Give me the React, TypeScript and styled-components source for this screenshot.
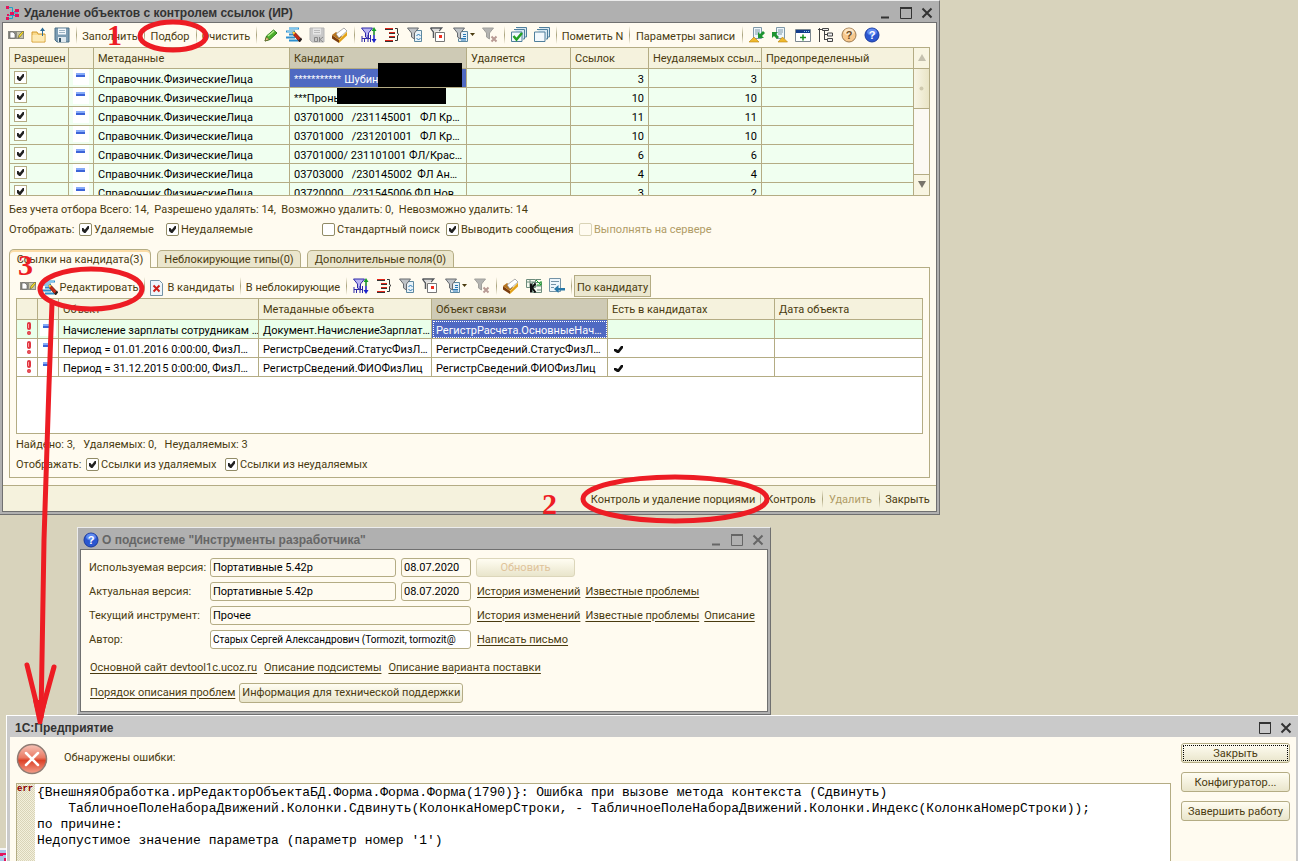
import React from 'react';
import styled, { createGlobalStyle, css } from 'styled-components';

const c = {
  desk: '#d8d3bc',
  paper: '#fffbf0',
  head: '#f5f2dd',
  headActive: '#cecab5',
  line: '#b4ac84',
  text: '#4a3b10',
  muted: '#b09c66',
  green: '#f0fff0',
  select: '#4f69c2',
  mark: '#ed1c24',
  frame: '#b0b0b0',
  frameDark: '#707070',
};

const Global = createGlobalStyle`
  *, *::before, *::after { box-sizing: border-box; }
  body { margin: 0; background: ${c.desk}; }
  body, button, input { font: 11px/14px Roboto, "Liberation Sans", sans-serif; color: ${c.text}; }
`;

/* ---------- desktop and window frames ---------- */

const Desktop = styled.main`
  position: relative;
  min-height: 100vh;
  overflow: hidden;
  background: ${c.desk};
`;

const frame = css`
  position: absolute;
  display: flex;
  flex-direction: column;
`;

const ToolWindow = styled.section`
  ${frame}
  padding: 0 2px 2px;
  background: ${c.frame};
  border: 1px solid;
  border-color: #ececec ${c.frameDark} ${c.frameDark} #ececec;
`;

const MainWindow = styled(ToolWindow)`
  left: -1px;
  top: 0;
  width: 941px;
  height: 515px;
`;

const AboutWindow = styled(ToolWindow)`
  left: 77px;
  top: 527px;
  width: 694px;
  height: 188px;
`;

const ErrorWindow = styled.section`
  ${frame}
  left: 6px;
  right: 0;
  top: 715px;
  bottom: 0;
  padding: 0 2px 0 3px;
  background: #cacaca;
  border: solid #fff;
  border-width: 1px 0 0 1px;
`;

const TitleBar = styled.header<{ $inactive?: boolean; $plain?: boolean }>`
  display: flex;
  align-items: center;
  gap: 3px;
  height: 21px;
  flex: none;
  padding: 2px 0 0 ${p => (p.$plain ? 5 : 3)}px;
  color: ${p => (p.$inactive ? '#666' : '#333')};
`;

const Title = styled.h1`
  flex: 1;
  margin: 0;
  font: bold 12px/16px "Liberation Sans", sans-serif;
  white-space: nowrap;
`;

const WindowButtonRow = styled.div`
  display: flex;
`;

const WindowButton = styled.button`
  width: 21px;
  height: 18px;
  padding: 0;
  border: 0;
  background: none;
  color: inherit;
  display: grid;
  place-items: center;
`;

const Body = styled.div`
  flex: 1;
  min-height: 0;
  display: flex;
  flex-direction: column;
  background: ${c.paper};
  border: 1px solid ${c.frameDark};
`;

/* ---------- toolbar parts ---------- */

const Toolbar = styled.div<{ $inner?: boolean }>`
  display: flex;
  align-items: center;
  flex: none;
  height: ${p => (p.$inner ? 22 : 24)}px;
  padding-left: ${p => (p.$inner ? 0 : 1)}px;
`;

const IconButton = styled.button<{ $menu?: boolean }>`
  width: ${p => (p.$menu ? 29 : 23)}px;
  height: 22px;
  padding: 0;
  border: 0;
  background: none;
  display: flex;
  align-items: center;
  justify-content: center;
  gap: 1px;
`;

const TextButton = styled.button<{ $w: number }>`
  width: ${p => p.$w}px;
  height: 22px;
  padding: 3px 0 0;
  border: 0;
  background: none;
  display: flex;
  align-items: center;
  justify-content: center;
  gap: 2px;
  white-space: nowrap;
  &:disabled { color: ${c.muted}; }
`;

const ToggleButton = styled(TextButton)`
  background: #ebe7cf;
  border: 1px solid ${c.line};
`;

const Separator = styled.span`
  width: 6px;
  height: 18px;
  flex: none;
  background: linear-gradient(transparent, #aaa37c, transparent) 3px 0 / 1px 100% no-repeat;
`;

/* ---------- data grids ---------- */

const GridFrame = styled.div<{ $h: number }>`
  display: flex;
  flex: none;
  height: ${p => p.$h}px;
  border: 1px solid ${c.line};
  background: #fff;
  overflow: hidden;
`;

const Grid = styled.table`
  flex: 1;
  width: 100%;
  height: max-content;
  table-layout: fixed;
  border-collapse: separate;
  border-spacing: 0;
  color: #000;
`;

const Col = styled.col<{ $w?: number }>`
  width: ${p => (p.$w ? `${p.$w}px` : 'auto')};
`;

const cell = css`
  border: solid ${c.line};
  border-width: 0 1px 1px 0;
  text-align: left;
  font-weight: normal;
  white-space: pre;
  overflow: hidden;
`;

const Th = styled.th<{ $active?: boolean; $edge?: boolean }>`
  ${cell}
  height: 21px;
  padding: 2px 4px 0;
  color: ${c.text};
  background: ${p => (p.$active ? c.headActive : c.head)};
  &:last-child { border-right-width: ${p => (p.$edge ? 1 : 0)}px; }
`;

const Td = styled.td<{ $num?: boolean; $selected?: boolean; $icon?: boolean; $dotted?: boolean }>`
  ${cell}
  height: 19px;
  padding: 3px 4px 0;
  line-height: 14px;
  ${p => p.$num && 'text-align: right;'}
  ${p => p.$icon && 'padding: 0; vertical-align: top; line-height: 0; text-align: center;'}
  ${p => p.$selected && `background: ${c.select}; color: #fff;`}
  ${p => p.$dotted && 'outline: 1px dotted #fff; outline-offset: -2px;'}
`;

const TickBox = styled.span`
  display: flex;
  align-items: center;
  padding-left: 2px;
  height: 12px;
`;

const Stars = styled.span`
  font-family: "Liberation Sans", sans-serif;
`;

const Row = styled.tr<{ $tint?: string }>`
  background: ${p => p.$tint ?? '#fff'};
  & > td:last-child { border-right: ${p => (p.$tint === c.green ? '1px' : '0')} solid ${c.line}; }
`;

const ScrollBar = styled.div`
  width: 15px;
  flex: none;
  display: flex;
  flex-direction: column;
  background: #fbf9f3;
`;

const ScrollButton = styled.button<{ $end?: boolean }>`
  height: 21px;
  padding: 0;
  border: solid ${c.line};
  border-width: ${p => (p.$end ? '1px 0 0' : '0 0 1px')};
  background: #f8f5e2;
  display: grid;
  place-items: center;
`;

const ScrollThumb = styled.div`
  height: 40px;
  display: grid;
  place-items: center;
  border-bottom: 1px solid ${c.line};
  background: linear-gradient(90deg, #f8f6e6, #e9e4c6);
  margin-bottom: auto;
`;

/* ---------- check boxes and text rows ---------- */

const CheckBox = styled.input<{ $square?: boolean }>`
  appearance: none;
  flex: none;
  display: inline-block;
  width: 13px;
  height: 13px;
  margin: 0;
  background: #fff;
  border: 1px solid ${p => (p.$square ? c.line : '#918b66')};
  border-radius: ${p => (p.$square ? 0 : 2)}px;
  &:disabled { border-color: #d9d3b6; background: ${c.paper}; }
  &:checked::after {
    content: '';
    display: block;
    width: 7px;
    height: 7px;
    margin: 2px;
    background: #222;
    clip-path: polygon(0 30%, 20% 30%, 40% 55%, 82% 0, 100% 0, 100% 35%, 50% 100%, 30% 100%, 0 70%);
  }
`;

const CheckCell = styled.span`
  display: block;
  height: 18px;
  padding: 2px 0 0 4px;
  text-align: left;
`;

const InfoRow = styled.div`
  display: flex;
  align-items: center;
  flex: none;
  height: 20px;
  padding-top: 1px;
  white-space: pre;
`;

const Caption = styled.span`
  width: 70px;
`;

const CheckLabel = styled.label<{ $w?: number; $off?: boolean }>`
  width: ${p => (p.$w ? `${p.$w}px` : 'auto')};
  display: flex;
  align-items: center;
  gap: 2px;
  color: ${p => (p.$off ? c.muted : 'inherit')};
`;

/* ---------- main window ---------- */

const Content = styled.div`
  flex: 1;
  display: flex;
  flex-direction: column;
  padding: 0 6px 7px;
`;

const Status = styled.div`
  padding: 3px 0 10px;
`;

const Tabs = styled.div`
  display: flex;
  align-items: flex-end;
  gap: 6px;
  height: 18px;
  flex: none;
`;

const Tab = styled.button<{ $active?: boolean; $w: number }>`
  width: ${p => p.$w}px;
  height: ${p => (p.$active ? 19 : 17)}px;
  margin-bottom: ${p => (p.$active ? -1 : 0)}px;
  padding: 1px 0 0;
  border: 1px solid ${c.line};
  border-bottom: 0;
  border-radius: 5px 5px 0 0;
  background: ${p => (p.$active ? c.paper : '#ebe6cd')};
  ${p => p.$active && 'position: relative; box-shadow: inset 0 2px 0 #fbdca6;'}
`;

const TabPanel = styled.div`
  flex: 1;
  display: flex;
  flex-direction: column;
  padding: 7px 6px 0;
  border: 1px solid ${c.line};
`;

const ReferenceBox = styled.div`
  padding-top: 1px;
`;

const Footer = styled.footer`
  display: flex;
  align-items: center;
  justify-content: flex-end;
  flex: none;
  height: 26px;
  padding-right: 3px;
  background: ${c.head};
  border-top: 1px solid ${c.line};
`;

/* ---------- about window ---------- */

const AboutBody = styled(Body)`
  padding: 8px 8px 0;
`;

const Form = styled.div`
  display: grid;
  grid-template-columns: 116px 186px 70px 1fr;
  gap: 5px;
  align-items: center;
`;

const FieldLabel = styled.label`
  white-space: nowrap;
`;

const Field = styled.input<{ $wide?: boolean; $small?: boolean }>`
  ${p => p.$wide && 'grid-column: 2 / 4;'}
  width: 100%;
  min-width: 0;
  height: 19px;
  padding: 0 2px;
  color: #000;
  background: ${p => (p.$small ? '#fff' : c.paper)};
  border: 1px solid ${c.line};
  border-radius: 3px;
  ${p => p.$small && 'font-size: 10px;'}
`;

const Links = styled.div<{ $gap: number }>`
  display: flex;
  align-items: center;
  gap: ${p => p.$gap}px;
  padding-left: 1px;
`;

const BottomLinks = styled(Links)`
  height: 19px;
  margin-top: ${p => (p.$gap > 6 ? 9 : 6)}px;
`;

const Link = styled.a`
  color: ${c.text};
  text-decoration: underline;
  text-underline-offset: 2px;
  white-space: nowrap;
`;

const PushButton = styled.button<{ $w: number; $focus?: boolean }>`
  width: ${p => p.$w}px;
  height: 20px;
  padding: 1px 0 0;
  border: 1px solid ${c.line};
  border-radius: 3px;
  background: linear-gradient(#fffdf2, #e9e5cb);
  white-space: nowrap;
  ${p => p.$focus && 'outline: 1px dotted #000; outline-offset: -3px;'}
  &:disabled { color: #dfc39a; border-color: #dcd6ba; height: 19px; }
`;

/* ---------- error window ---------- */

const ErrorBody = styled.div`
  flex: 1;
  display: flex;
  gap: 10px;
  min-height: 0;
  padding: 6px 6px 0;
  background: ${c.paper};
`;

const ErrorMain = styled.div`
  flex: 1;
  display: flex;
  flex-direction: column;
`;

const ErrorHead = styled.div`
  display: flex;
  gap: 16px;
  height: 40px;
  line-height: 29px;
`;

const ErrorText = styled.div`
  flex: 1;
  display: flex;
  background: #fff;
  border: 1px solid ${c.line};
  border-bottom: 0;
`;

const Gutter = styled.div`
  width: 18px;
  overflow: hidden;
  color: #8b0000;
  font: bold 9px/10px "Liberation Mono", monospace;
  background: repeating-conic-gradient(#d9d4b8 0 25%, #f3f0dc 0 50%) 0 0 / 2px 2px;
`;

const Message = styled.textarea`
  flex: 1;
  padding: 1px 2px;
  border: 0;
  resize: none;
  overflow: hidden;
  background: none;
  color: #000;
  font: 13px/16px "Liberation Mono", monospace;
  white-space: pre;
`;

const Side = styled.div`
  display: flex;
  flex-direction: column;
  gap: 9px;
`;

/* ---------- marker layer ---------- */

const Marks = styled.svg`
  position: absolute;
  inset: 0;
  width: 100%;
  height: 100%;
  pointer-events: none;
`;

const Numeral = styled.span<{ $x: number; $y: number }>`
  position: absolute;
  left: ${p => p.$x}px;
  top: ${p => p.$y}px;
  color: ${c.mark};
  font: bold 30px/30px "Liberation Serif", serif;
`;

const TaskIcon = styled.div`
  position: absolute;
  left: 0;
  top: 848px;
  width: 6px;
  height: 13px;
  background: #a9c4e8;
  border-top: 2px solid #f4f4f4;
  line-height: 0;
`;

/* ---------- icons ---------- */

const Svg = ({ children, w = 16, h = 16 }: { children: React.ReactNode; w?: number; h?: number }) => (
  <svg width={w} height={h} viewBox={`0 0 ${w} ${h}`} fill="none" aria-hidden="true">{children}</svg>
);

const TreeLogo = () => (
  <Svg>
    <path d="M4 2.500h3.500v11H4M7.500 8H13M5 10.500h7M9 6.500h4M4 10.500h4" stroke="#1ea0c8" />
    <path d="M1 1h3v3H1zM1 12h3v3H1zM5 7h4v3H5zM10 4h4v3h-4zM10 9h4v3h-4zM2 9h2v2H2z" fill="#e4125c" />
  </Svg>
);
const FormIcon = () => (
  <Svg>
    <path d="M0 4h16v8H0z" fill="#8c8c84" />
    <path d="M2 5h3l2 2v4H2z" fill="#fff" stroke="#555" strokeWidth=".6" />
    <path d="M9 5h6v6H9z" fill="#c9c5a8" />
    <path d="M10 11l1-3 4-4 1 1-4 5z" fill="#ffe11c" stroke="#444" strokeWidth=".5" />
  </Svg>
);
const FolderUp = () => (
  <Svg>
    <path d="M1 5h5l1 2h7v8H1z" fill="#f9d98a" stroke="#d29a2c" />
    <path d="M1.500 8h12v6.500h-12z" fill="#fdeab4" />
    <path d="M11.500 9V3" stroke="#2d6b96" />
    <path d="M9 4l2.500-3.500L14 4z" fill="#2d6b96" />
  </Svg>
);
const Floppy = ({ off }: { off?: boolean }) => (
  <Svg>
    <path d="M1 1h14v14H3l-2-2z" fill={off ? '#c9c9c9' : '#7d9db3'} stroke={off ? '#b5b5b5' : '#4d7088'} />
    <path d="M4 1.500h8v6H4z" fill={off ? '#e6e6e6' : '#f4f9fc'} />
    <path d="M5 3.500h6M5 5.500h6" stroke={off ? '#bbb' : '#9db4c4'} />
    {off
      ? <path d="M5.500 10.500h3v4h-3zM10.500 10v5M14 10l-3 2.500L14 15" stroke="#888" />
      : <><path d="M4 10h8v5H4z" fill="#dfe9ef" /><path d="M5 11h2v4H5z" fill="#33536a" /></>}
  </Svg>
);
const Pencil = () => (
  <Svg>
    <path d="M2 14l1.500-5 7-6 3.500 3-7 6.500z" fill="#4caf2c" stroke="#2c7a1a" />
    <path d="M5 9l6-5" stroke="#b4ec8c" strokeWidth="1.500" />
    <path d="M2 14l1.500-4 2.500 2.500z" fill="#f2d08c" stroke="#5a4a20" strokeWidth=".6" />
  </Svg>
);
const ListPencil = () => (
  <Svg>
    <path d="M3 1.500h10M0 4.500h9M3 7.500h7M0 10.500h9M3 13.500h9" stroke="#2c8fd0" strokeWidth="2" />
    <path d="M3 1.500h9M1 4.500h7" stroke="#7cc8f0" />
    <path d="M7 5l2 .3 6.500 7-2 2.500L7.500 8z" fill="#c62a17" stroke="#5c1208" strokeWidth=".7" />
    <path d="M6.500 4.500L9.500 5.500 7.500 8z" fill="#ffd83c" />
    <path d="M12 14l3-3.500 1 2-2 2.500z" fill="#222" />
  </Svg>
);
const Book = () => (
  <Svg>
    <path d="M0 8l7 5V16l-7-4.500z" fill="#7a3c0c" />
    <path d="M7 13l8-8v3.500L7 16z" fill="#e0a01a" />
    <path d="M0 8l4-3 6 4.500L7 13z" fill="#b8741c" />
    <path d="M4 7l8-6 3 3-8 7z" fill="#fff" stroke="#777" strokeWidth=".6" />
    <path d="M7 13l8-8" stroke="#f4c44c" />
  </Svg>
);
const Funnel = ({ fill = '#bfc3c7', stroke = '#666a6f' }: { fill?: string; stroke?: string }) => (
  <path d="M.5 1h11L7.500 6v6l-3-2V6z" fill={fill} stroke={stroke} />
);
const FilterSort = () => (
  <Svg>
    <Funnel fill="#b8b4f4" stroke="#2f2aa8" />
    <path d="M1 15V9M3.500 15v-4M7 15V8M9.500 15V8M1 11.500h9" stroke="#2f2aa8" />
    <path d="M13 8V3" stroke="#108a20" strokeWidth="1.500" /><path d="M10.500 4L13 0l2.500 4z" fill="#18a028" />
    <path d="M13 8v5" stroke="#1a22c8" strokeWidth="1.500" /><path d="M10.500 12l2.500 4 2.500-4z" fill="#1a22c8" />
  </Svg>
);
const RedBrace = () => (
  <Svg>
    <path d="M1 1.500h8M5 5.500h6M5 9.500h6M1 13.500h8" stroke="#e02418" />
    <path d="M1 2.500h8M5 6.500h6M5 10.500h6M1 14.500h8" stroke="#333" />
    <path d="M11 1.500h2.500v5l1.500 1-1.500 1v5H11" stroke="#333" />
  </Svg>
);
const FilterPage = () => (
  <Svg>
    <path d="M8.500 3.500h6v11h-7v-4" fill="#e8f2f8" stroke="#5d88a0" />
    <path d="M9.500 9l2-2 2 2M9.500 11l2 2 2-2" stroke="#2677b4" />
    <Funnel />
  </Svg>
);
const FilterRed = () => (
  <Svg>
    <path d="M5.500 5.500h9v9h-9z" fill="#fff" stroke="#777" />
    <path d="M9 8h3v3H9z" fill="#f03020" />
    <path d="M.5 1h11L9 4M.5 1l3 4v6" stroke="#55595e" strokeWidth="1.500" />
    <path d="M2 2h8L8 4.500H4z" fill="#dcdcdc" />
  </Svg>
);
const FilterList = () => (
  <Svg>
    <path d="M8.500 4.500h6v10h-9v-3" fill="#e8f2f8" stroke="#5d88a0" />
    <path d="M10 7.500h3M10 9.500h3M8 11.500h5M8 13h5" stroke="#2677b4" />
    <Funnel />
  </Svg>
);
const FilterOff = () => (
  <Svg>
    <Funnel fill="#b4b4b2" stroke="#a0a09c" />
    <path d="M9.500 9.500l5 5M14.500 9.500l-5 5" stroke="#b89a94" strokeWidth="2" />
  </Svg>
);
const Stack = ({ check }: { check?: boolean }) => (
  <Svg>
    <path d="M5 .5h10.500V10H14M3 2.500h10.500V12H12" stroke="#4f7f9c" fill="#d7e8f2" />
    <path d="M.5 5h10.500v9.500H.5z" fill="#f3f9fd" stroke="#4f7f9c" />
    {check && <path d="M2.500 9l3 3.500L11 6" stroke="#23a023" strokeWidth="2.500" />}
  </Svg>
);
const ListGold = ({ left }: { left?: boolean }) => (
  <Svg>
    <path d="M4.500.5h8v11h-8z" fill="#eef6fb" stroke="#7f99a8" />
    <path d="M6 3h5M6 5h5M6 7h4" stroke="#7f99a8" />
    <path d={left ? 'M6 15l4.500-5 5 5z' : 'M0 15l5-5 5 5z'} fill="#efb92c" stroke="#b88410" strokeWidth=".6" />
    {left
      ? <path d="M0 5h6L4 7l3 3-2 2-3-3-2 2z" fill="#1d9430" />
      : <path d="M9 11V5l2 2 3-3 2 2-3 3 2 2z" fill="#1d9430" />}
  </Svg>
);
const WindowPlus = () => (
  <Svg>
    <path d="M.5 2.500h15v12H.5z" fill="#fff" stroke="#7c8890" />
    <path d="M1 3h14v3H1z" fill="#123c8c" />
    <path d="M9 4.500h5" stroke="#8cd0f0" strokeDasharray="1 1" />
    <path d="M8 7.500v6M5 10.500h6" stroke="#169020" strokeWidth="1.500" />
  </Svg>
);
const TreeIcon = () => (
  <Svg>
    <path d="M1.500 1v14M0 2.500h5M6.500 4v9M6 7.500h3M6 12.500h3" stroke="#444" />
    <path d="M4.500 1.500h6v2h-6zM9.500 6h5v3h-5zM9.500 11.500h5v3h-5z" fill="#eee" stroke="#444" />
  </Svg>
);
const QMark = styled.text`
  font: bold 11px "Liberation Sans", sans-serif;
  text-anchor: middle;
`;
const Help = ({ blue }: { blue?: boolean }) => (
  <Svg>
    <circle cx="8" cy="8" r="7" fill={blue ? '#2b57d0' : '#f8c88c'} stroke={blue ? '#1b3a9c' : '#9c7a50'} />
    <ellipse cx="8" cy="5" rx="5" ry="3.500" fill={blue ? '#5f8af0' : '#fde6c4'} />
    <QMark x="8" y="12" fill={blue ? '#fff' : '#6c4a20'}>?</QMark>
  </Svg>
);
const PageCross = () => (
  <Svg>
    <path d="M1.500.5h9l3 3v12h-12z" fill="#eef6fb" stroke="#7493a6" />
    <path d="M4.500 5.500l6 6M10.500 5.500l-6 6" stroke="#d02018" strokeWidth="2" />
  </Svg>
);
const GridK = () => (
  <Svg>
    <path d="M.5 1.500h9v8h-9zM6.500 4.500h9v10h-9z" fill="#f6faf0" stroke="#6d8c7c" />
    <path d="M1 4h8M4 2v7M10 1.500h5M7 8h8M11 12h4" stroke="#6d8c7c" />
    <path d="M5 5.500v9M9.500 5.500l-3.500 4 3.500 5" stroke="#111" strokeWidth="2" />
    <path d="M10 2l5 5M15 3v4h-4" stroke="#18a028" />
  </Svg>
);
const PageArrow = () => (
  <Svg>
    <path d="M.5.5h11v13H.5z" fill="#eef6fb" stroke="#7493a6" />
    <path d="M2 3.500h8M2 6.500h5M2 9.500h3" stroke="#7493a6" />
    <path d="M5 11l4.500-4v3H16v2.500H9.500V15z" fill="#2878a8" />
  </Svg>
);
const Caret = () => <Svg w={5} h={16}><path d="M0 6h5L2.500 9z" fill="#4a3b10" /></Svg>;
const Dash = () => (
  <Svg h={18}>
    <path d="M0 0h16v16H0z" fill="#fff" />
    <path d="M3 4h9v4H3z" fill="#3c64d8" /><path d="M3 4h9v2H3z" fill="#86aaf8" />
  </Svg>
);
const Alert = () => (
  <Svg h={18}>
    <rect x="8" y="2" width="4" height="8" rx="2" fill="#e03440" />
    <rect x="8" y="11" width="4" height="4" rx="2" fill="#e03440" />
    <path d="M9.500 4v4M9.500 13h1" stroke="#ff9a9c" />
  </Svg>
);
const Tick = () => <TickBox><Svg w={9} h={9}><path d="M0 4h2l2 1 3-4h2v2L5 8H3L0 6z" fill="#111" /></Svg></TickBox>;
const ErrorIcon = () => (
  <Svg w={32} h={32}>
    <defs>
      <linearGradient id="ball" x1="0" y1="0" x2="0" y2="1">
        <stop offset="0" stopColor="#f6c4b8" /><stop offset=".45" stopColor="#ea7a64" />
        <stop offset=".55" stopColor="#dc4228" /><stop offset="1" stopColor="#f4a08c" />
      </linearGradient>
    </defs>
    <circle cx="16" cy="16" r="14.500" fill="url(#ball)" stroke="#8f7c74" strokeWidth="1.500" />
    <path d="M10 10l12 12M22 10L10 22" stroke="#fff" strokeWidth="2.500" strokeLinecap="round" />
  </Svg>
);

/* ---------- shared pieces ---------- */

const WindowButtons = ({ min = true }: { min?: boolean }) => (
  <WindowButtonRow>
    {min && <WindowButton aria-label="Свернуть"><Svg w={12} h={12}><path d="M2 10.500h8" stroke="currentColor" strokeWidth="2" /></Svg></WindowButton>}
    <WindowButton aria-label="Развернуть"><Svg w={12} h={12}><path d="M.5.5h11v11H.5z" stroke="currentColor" /><path d="M0 1h12" stroke="currentColor" strokeWidth="2" /></Svg></WindowButton>
    <WindowButton aria-label="Закрыть окно"><Svg w={12} h={12}><path d="M1.500 1.500l9 9M10.500 1.500l-9 9" stroke="currentColor" strokeWidth="2" /></Svg></WindowButton>
  </WindowButtonRow>
);

const Tool = ({ name, children, menu }: { name: string; children: React.ReactNode; menu?: boolean }) => (
  <IconButton aria-label={name} $menu={menu}>{children}{menu && <Caret />}</IconButton>
);

const FilterTools = () => (
  <>
    <Tool name="Отбор и сортировка"><FilterSort /></Tool>
    <Tool name="Настройка списка"><RedBrace /></Tool>
    <Tool name="Обновить отбор"><FilterPage /></Tool>
    <Tool name="Отбор по значению"><FilterRed /></Tool>
    <Tool name="История отборов" menu><FilterList /></Tool>
    <Tool name="Отключить отбор"><FilterOff /></Tool>
  </>
);

const candidates: { stars?: string; name: string; refs: number; kept: number }[] = [
  { stars: '*********** ', name: 'Шубин', refs: 3, kept: 3 },
  { stars: '***', name: 'Пронь', refs: 10, kept: 10 },
  { name: '03701000   /231145001   ФЛ Кр…', refs: 11, kept: 11 },
  { name: '03701000   /231201001   ФЛ Кр…', refs: 10, kept: 10 },
  { name: '03701000/ 231101001 ФЛ/Крас…', refs: 6, kept: 6 },
  { name: '03703000   /230145002  ФЛ Ан…', refs: 4, kept: 4 },
  { name: '03720000   /231545006 ФЛ Нов…', refs: 3, kept: 2 },
];

const references: [string, string, string, boolean][] = [
  ['Начисление зарплаты сотрудникам …', 'Документ.НачислениеЗарплат…', 'РегистрРасчета.ОсновныеНач…', false],
  ['Период = 01.01.2016 0:00:00, ФизЛ…', 'РегистрСведений.СтатусФизЛ…', 'РегистрСведений.СтатусФизЛ…', true],
  ['Период = 31.12.2015 0:00:00, ФизЛ…', 'РегистрСведений.ФИОФизЛиц', 'РегистрСведений.ФИОФизЛиц', true],
];

const errorText = `{ВнешняяОбработка.ирРедакторОбъектаБД.Форма.Форма.Форма(1790)}: Ошибка при вызове метода контекста (Сдвинуть)
    ТабличноеПолеНабораДвижений.Колонки.Сдвинуть(КолонкаНомерСтроки, - ТабличноеПолеНабораДвижений.Колонки.Индекс(КолонкаНомерСтроки));
по причине:
Недопустимое значение параметра (параметр номер '1')`;

const CandidateGrid = () => (
  <GridFrame $h={149}>
    <Grid>
      <colgroup>{[59, 25, 196, 177, 104, 78, 113, 152].map((w, i) => <Col key={i} $w={w} />)}</colgroup>
      <thead>
        <tr>
          <Th>Разрешен</Th><Th /><Th>Метаданные</Th><Th $active>Кандидат</Th>
          <Th>Удаляется</Th><Th>Ссылок</Th><Th>Неудаляемых ссыл…</Th>
          <Th $edge>Предопределенный</Th>
        </tr>
      </thead>
      <tbody>
        {candidates.map(({ stars, name, refs, kept }, i) => (
          <Row key={i} $tint={c.green}>
            <Td $icon><CheckCell><CheckBox type="checkbox" $square defaultChecked aria-label="Разрешен" /></CheckCell></Td>
            <Td $icon><Dash /></Td>
            <Td>Справочник.ФизическиеЛица</Td>
            <Td $selected={i === 0}>{stars && <Stars>{stars}</Stars>}{name}</Td>
            <Td /><Td $num>{refs}</Td><Td $num>{kept}</Td><Td />
          </Row>
        ))}
      </tbody>
    </Grid>
    <ScrollBar>
      <ScrollButton aria-label="Вверх"><Svg w={8} h={8}><path d="M0 7l4-7 4 7z" fill="#c4c0ae" /></Svg></ScrollButton>
      <ScrollThumb><Svg w={5} h={5}><circle cx="2.500" cy="2.500" r="2" fill="#cfc9ae" /></Svg></ScrollThumb>
      <ScrollButton $end aria-label="Вниз"><Svg w={8} h={8}><path d="M0 0h8L4 7z" fill="#77746a" /></Svg></ScrollButton>
    </ScrollBar>
  </GridFrame>
);

const ReferenceGrid = () => (
  <GridFrame $h={136}>
    <Grid>
      <colgroup>{[21, 21, 200, 173, 176, 167, undefined].map((w, i) => <Col key={i} $w={w} />)}</colgroup>
      <thead>
        <tr>
          <Th /><Th /><Th>Объект</Th><Th>Метаданные объекта</Th><Th $active>Объект связи</Th>
          <Th>Есть в кандидатах</Th><Th>Дата объекта</Th>
        </tr>
      </thead>
      <tbody>
        {references.map(([object, meta, link, own], i) => (
          <Row key={i} $tint={i === 0 ? '#eaffea' : undefined}>
            <Td $icon><Alert /></Td>
            <Td $icon><Dash /></Td>
            <Td>{object}</Td>
            <Td>{meta}</Td>
            <Td $selected={i === 0} $dotted={i === 0}>{link}</Td>
            <Td>{own && <Tick />}</Td>
            <Td />
          </Row>
        ))}
      </tbody>
    </Grid>
  </GridFrame>
);

export default function App() {
  return (
    <Desktop>
      <Global />

      <MainWindow>
        <TitleBar>
          <TreeLogo />
          <Title>Удаление объектов с контролем ссылок (ИР)</Title>
          <WindowButtons />
        </TitleBar>
        <Body>
          <Toolbar>
            <Tool name="Форма"><FormIcon /></Tool>
            <Tool name="Открыть"><FolderUp /></Tool>
            <Tool name="Сохранить"><Floppy /></Tool>
            <Separator />
            <TextButton $w={62}>Заполнить</TextButton>
            <Separator />
            <TextButton $w={46}>Подбор</TextButton>
            <Separator />
            <TextButton $w={54}>Очистить</TextButton>
            <Separator />
            <Tool name="Изменить"><Pencil /></Tool>
            <Tool name="Редактировать объект"><ListPencil /></Tool>
            <Tool name="Записать"><Floppy off /></Tool>
            <Tool name="Обработать"><Book /></Tool>
            <Separator />
            <FilterTools />
            <Separator />
            <Tool name="Установить пометки"><Stack check /></Tool>
            <Tool name="Снять пометки"><Stack /></Tool>
            <Separator />
            <TextButton $w={67}>Пометить N</TextButton>
            <Separator />
            <TextButton $w={107}>Параметры записи</TextButton>
            <Separator />
            <Tool name="Выгрузить"><ListGold /></Tool>
            <Tool name="Загрузить"><ListGold left /></Tool>
            <Tool name="Новое окно"><WindowPlus /></Tool>
            <Tool name="Структура"><TreeIcon /></Tool>
            <Tool name="Подсказка"><Help /></Tool>
            <Tool name="Справка"><Help blue /></Tool>
          </Toolbar>
          <Content>
            <CandidateGrid />
            <Status>
              <InfoRow>Без учета отбора Всего: 14,  Разрешено удалять: 14,  Возможно удалить: 0,  Невозможно удалить: 14</InfoRow>
              <InfoRow>
                <Caption>Отображать:</Caption>
                <CheckLabel $w={87}><CheckBox type="checkbox" defaultChecked />Удаляемые</CheckLabel>
                <CheckLabel $w={156}><CheckBox type="checkbox" defaultChecked />Неудаляемые</CheckLabel>
                <CheckLabel $w={124}><CheckBox type="checkbox" />Стандартный поиск</CheckLabel>
                <CheckLabel $w={133}><CheckBox type="checkbox" defaultChecked />Выводить сообщения</CheckLabel>
                <CheckLabel $off><CheckBox type="checkbox" disabled />Выполнять на сервере</CheckLabel>
              </InfoRow>
            </Status>
            <Tabs role="tablist">
              <Tab role="tab" $active $w={142}>Ссылки на кандидата(3)</Tab>
              <Tab role="tab" $w={144}>Неблокирующие типы(0)</Tab>
              <Tab role="tab" $w={147}>Дополнительные поля(0)</Tab>
            </Tabs>
            <TabPanel>
              <Toolbar $inner>
                <Tool name="Форма"><FormIcon /></Tool>
                <TextButton $w={102}><ListPencil />Редактировать</TextButton>
                <Separator />
                <TextButton $w={90}><PageCross />В кандидаты</TextButton>
                <Separator />
                <TextButton $w={100}>В неблокирующие</TextButton>
                <Separator />
                <FilterTools />
                <Separator />
                <Tool name="Обработать"><Book /></Tool>
                <Tool name="Консоль"><GridK /></Tool>
                <Tool name="Перейти"><PageArrow /></Tool>
                <Separator />
                <ToggleButton $w={77}>По кандидату</ToggleButton>
              </Toolbar>
              <ReferenceBox><ReferenceGrid /></ReferenceBox>
              <InfoRow>Найдено: 3,   Удаляемых: 0,   Неудаляемых: 3</InfoRow>
              <InfoRow>
                <Caption>Отображать:</Caption>
                <CheckLabel $w={139}><CheckBox type="checkbox" defaultChecked />Ссылки из удаляемых</CheckLabel>
                <CheckLabel><CheckBox type="checkbox" defaultChecked />Ссылки из неудаляемых</CheckLabel>
              </InfoRow>
            </TabPanel>
          </Content>
          <Footer>
            <TextButton $w={168}>Контроль и удаление порциями</TextButton>
            <Separator />
            <TextButton $w={56}>Контроль</TextButton>
            <Separator />
            <TextButton $w={51} disabled>Удалить</TextButton>
            <Separator />
            <TextButton $w={51}>Закрыть</TextButton>
          </Footer>
        </Body>
      </MainWindow>

      <AboutWindow>
        <TitleBar $inactive>
          <Help blue />
          <Title>О подсистеме "Инструменты разработчика"</Title>
          <WindowButtons />
        </TitleBar>
        <AboutBody>
          <Form>
            <FieldLabel htmlFor="used">Используемая версия:</FieldLabel>
            <Field id="used" readOnly value="Портативные 5.42p" />
            <Field readOnly value="08.07.2020" aria-label="Дата используемой версии" />
            <PushButton $w={99} disabled>Обновить</PushButton>

            <FieldLabel htmlFor="actual">Актуальная версия:</FieldLabel>
            <Field id="actual" readOnly value="Портативные 5.42p" />
            <Field readOnly value="08.07.2020" aria-label="Дата актуальной версии" />
            <Links $gap={5}><Link href="#history">История изменений</Link><Link href="#issues">Известные проблемы</Link></Links>

            <FieldLabel htmlFor="tool">Текущий инструмент:</FieldLabel>
            <Field id="tool" $wide readOnly value="Прочее" />
            <Links $gap={5}>
              <Link href="#tool-history">История изменений</Link><Link href="#tool-issues">Известные проблемы</Link>
              <Link href="#about">Описание</Link>
            </Links>

            <FieldLabel htmlFor="author">Автор:</FieldLabel>
            <Field id="author" $wide $small readOnly value="Старых Сергей Александрович (Tormozit, tormozit@" />
            <Links $gap={5}><Link href="#mail">Написать письмо</Link></Links>
          </Form>
          <BottomLinks $gap={7}>
            <Link href="#site">Основной сайт devtool1c.ucoz.ru</Link>
            <Link href="#subsystem">Описание подсистемы</Link>
            <Link href="#delivery">Описание варианта поставки</Link>
          </BottomLinks>
          <BottomLinks $gap={4}>
            <Link href="#rules">Порядок описания проблем</Link>
            <PushButton $w={224}>Информация для технической поддержки</PushButton>
          </BottomLinks>
        </AboutBody>
      </AboutWindow>

      <TaskIcon><Svg w={6} h={11}><path d="M3 4h3M5 8v3" stroke="#e4125c" strokeWidth="2" /><path d="M0 3h3v3H0z" fill="#e4125c" /></Svg></TaskIcon>

      <ErrorWindow>
        <TitleBar $plain>
          <Title>1С:Предприятие</Title>
          <WindowButtons min={false} />
        </TitleBar>
        <ErrorBody>
          <ErrorMain>
            <ErrorHead><ErrorIcon />Обнаружены ошибки:</ErrorHead>
            <ErrorText>
              <Gutter>err</Gutter>
              <Message readOnly wrap="off" value={errorText} aria-label="Текст ошибки" />
            </ErrorText>
          </ErrorMain>
          <Side>
            <PushButton $w={109} $focus>Закрыть</PushButton>
            <PushButton $w={109}>Конфигуратор...</PushButton>
            <PushButton $w={109}>Завершить работу</PushButton>
          </Side>
        </ErrorBody>
      </ErrorWindow>

      <Numeral $x={107} $y={20}>1</Numeral>
      <Numeral $x={542} $y={489}>2</Numeral>
      <Numeral $x={18} $y={250}>3</Numeral>
      <Marks aria-hidden="true" fill="none" stroke={c.mark} strokeWidth="5">
        <path d="M378 63h84v24h-84zM337 88h109v16H337z" fill="#000" stroke="none" />
        <ellipse cx="173" cy="36" rx="33" ry="14" />
        <ellipse cx="91" cy="289" rx="51" ry="20" />
        <ellipse cx="675" cy="499" rx="92" ry="22" />
        <path d="M52 303L49 385L44 540L41 718" />
        <path d="M27 665L40 718L54 667" strokeLinecap="round" strokeLinejoin="bevel" />
        <path d="M33 700h14l-5 24h-4z" fill={c.mark} stroke="none" />
      </Marks>
    </Desktop>
  );
}
